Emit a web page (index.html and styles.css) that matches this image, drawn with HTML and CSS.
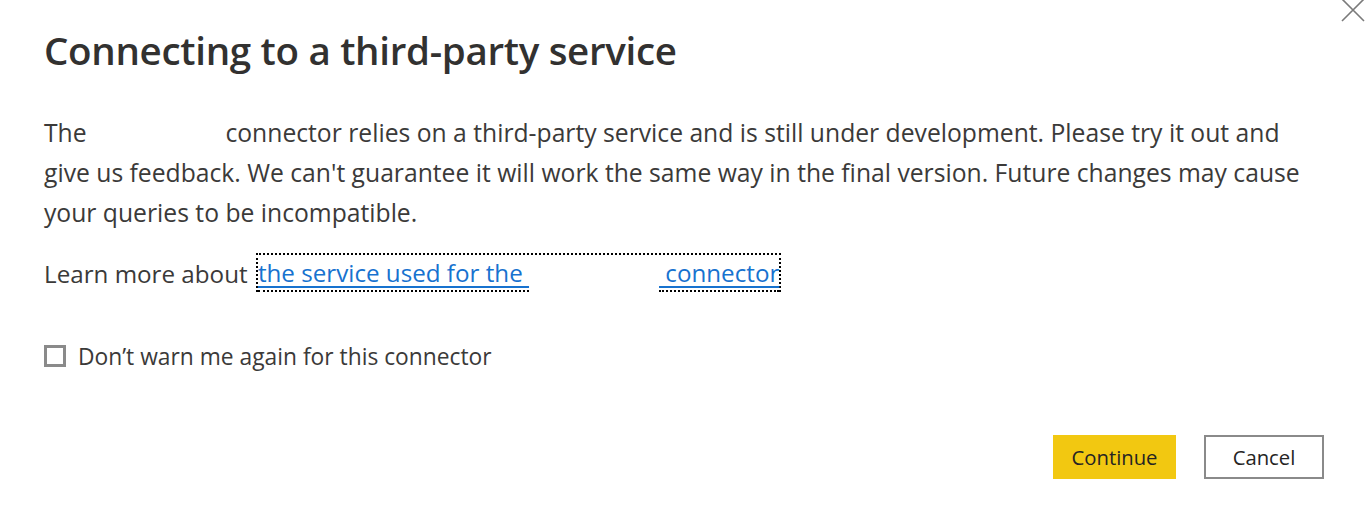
FILE: index.html
```html
<!DOCTYPE html>
<html>
<head>
<meta charset="utf-8">
<link rel="stylesheet" href="styles.css">
</head>
<body>
<div class="dialog">
  <button class="close" aria-label="Close">
    <svg width="24" height="24" viewBox="0 0 24 24"><path d="M1 1 L23 23 M23 1 L1 23" stroke="#7a7a7a" stroke-width="1.6" fill="none"/></svg>
  </button>
  <h1 class="title">Connecting to a third-party service</h1>
  <p class="text">The <span class="blank"></span> connector relies on a third-party service and is still under development. Please try it out and<br>give us feedback. We can't guarantee it will work the same way in the final version. Future changes may cause<br>your queries to be incompatible.</p>
  <p class="learn">Learn more about <a class="link" href="#"><span class="seg">the service used for the&nbsp;</span><span class="gap"></span><span class="seg">&nbsp;connector</span></a></p>
  <label class="check"><span class="box"></span><span>Don’t warn me again for this connector</span></label>
  <div class="actions">
    <button class="btn primary">Continue</button>
    <button class="btn secondary">Cancel</button>
  </div>
</div>
</body>
</html>
```

FILE: styles.css
```css
html, body {
  margin: 0;
  background: #ffffff;
}
body {
  font-family: "Open Sans", "Noto Sans", sans-serif;
  color: #333333;
}
.dialog {
  position: relative;
  width: 1372px;
  height: 516px;
  box-sizing: border-box;
  padding: 22px 48px 0 44px;
  overflow: hidden;
}
.close {
  position: absolute;
  top: -2px;
  right: 7px;
  padding: 0;
  border: 0;
  background: transparent;
  width: 24px;
  height: 24px;
}
.close svg { display: block; }
.title {
  margin: 0;
  font-size: 38.5px;
  font-weight: 600;
  line-height: 56px;
  color: #323130;
  letter-spacing: -0.3px;
}
.text {
  margin: 35px 0 0;
  font-size: 24.7px;
  line-height: 40px;
  white-space: nowrap;
  color: #3b3a39;
}
.blank {
  display: inline-block;
  width: 126px;
}
.learn {
  margin: 21px 0 0;
  font-size: 24.2px;
  line-height: 40px;
  color: #3b3a39;
  white-space: nowrap;
}
.link {
  display: inline-flex;
  vertical-align: top;
  border-top: 2px dotted #000;
  border-left: 2px dotted #000;
  border-right: 2px dotted #000;
  margin-top: -1px;
  margin-left: 2px;
  line-height: 35px;
  color: #0f6cbd;
  text-decoration: none;
}
.seg {
  border-bottom: 2px dotted #000;
  text-decoration: underline;
  text-decoration-thickness: 2px;
  text-underline-offset: 4px;
  color: #1772cf;
}
.gap {
  width: 130px;
}
.check {
  display: flex;
  align-items: center;
  margin-top: 42px;
  height: 40px;
  font-size: 22.8px;
  color: #3b3a39;
}
.box {
  width: 16px;
  height: 16px;
  border: 3px solid #8a8a8a;
  margin-right: 12px;
  background: #fff;
}
.actions {
  display: flex;
  justify-content: flex-end;
  gap: 28px;
  margin-top: 59px;
}
.btn {
  font-family: "Open Sans", "Noto Sans", sans-serif;
  font-size: 20.3px;
  height: 44px;
  color: #252423;
  padding: 0;
  cursor: pointer;
}
.primary {
  width: 123px;
  background: #f2c811;
  border: 0;
}
.secondary {
  width: 120px;
  background: #fff;
  border: 2px solid #8a8a8a;
}
```
